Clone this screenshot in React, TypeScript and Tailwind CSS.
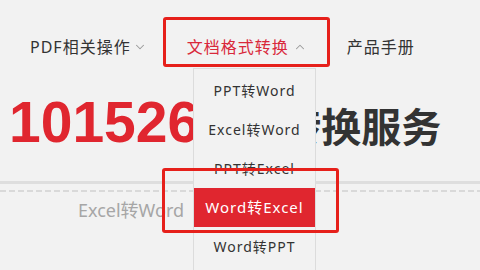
import { ChevronDown, ChevronUp } from 'lucide-react';

const menuItems = ['PPT转Word', 'Excel转Word', 'PPT转Excel', 'Word转Excel', 'Word转PPT'];

export default function App() {
  return (
    <div
      className="relative w-[480px] h-[270px] overflow-hidden bg-[#f2f2f2]"
      style={{ fontFamily: '"Noto Sans", "Noto Sans CJK SC", sans-serif' }}
    >
      <nav className="flex items-center h-[94px] pl-[30px] gap-[40px] text-[16px] tracking-[1px] text-[#333]">
        <div className="flex items-center gap-[2px]">
          <span>PDF相关操作</span>
          <ChevronDown className="w-[14px] h-[14px] text-[#999]" strokeWidth={1.75} />
        </div>
        <div className="flex items-center gap-[4px] text-[#d9283a]">
          <span>文档格式转换</span>
          <ChevronUp className="w-[14px] h-[14px] text-[#999]" strokeWidth={1.75} />
        </div>
        <div>产品手册</div>
      </nav>

      <h1 className="flex items-baseline pl-[9px] leading-none font-bold">
        <span
          className="text-[57px] text-[#e0262f]"
          style={{ fontFamily: '"Liberation Sans", sans-serif' }}
        >
          101526
        </span>
        <span className="ml-[82px] text-[40px] text-[#333]">转换服务</span>
      </h1>

      <div className="mt-[30px] h-[3px] bg-[#dedede]" />
      <div className="mt-[6px] h-[2px] bg-[repeating-linear-gradient(90deg,#d9d9d9_0_6px,transparent_6px_9px)]" />

      <div className="pl-[78px] mt-[5px] text-[18px] text-[#a6a6a6]">Excel转Word</div>

      {/* dropdown */}
      <div className="absolute left-[193px] top-[68px] w-[123px] h-[210px] pt-[2px] bg-[#f2f2f2] border border-[#dcdcdc]">
        {menuItems.map((item, i) => (
          <div
            key={item}
            className={
              i === 3
                ? 'h-[39px] flex items-center justify-center bg-[#e0262f] text-white text-[15px] tracking-[1px]'
                : 'h-[39px] flex items-center justify-center text-[#333] text-[14px] tracking-[1px]'
            }
          >
            {item}
          </div>
        ))}
      </div>

      {/* annotation boxes */}
      <div className="absolute left-[163px] top-[17px] w-[167px] h-[50px] border-[3px] border-[#e6201b] rounded-[3px]" />
      <div className="absolute left-[162px] top-[168px] w-[177px] h-[65px] border-[3px] border-[#e6201b] rounded-[3px]" />
    </div>
  );
}
